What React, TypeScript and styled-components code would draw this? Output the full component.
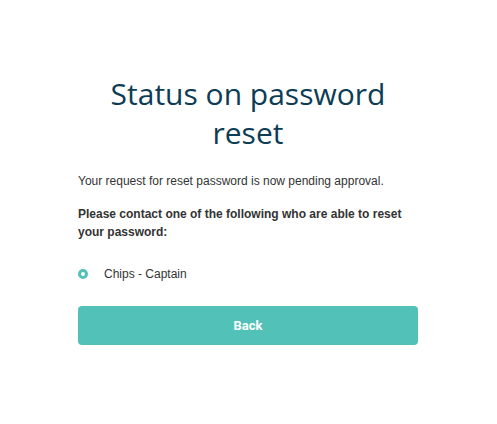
import React from "react";
import styled, { createGlobalStyle } from "styled-components";

const Global = createGlobalStyle`
  html, body { margin: 0; padding: 0; background: #ffffff; }
  body { font-family: "Liberation Sans", Arial, sans-serif; }
`;

const Page = styled.main`
  width: 340px;
  margin: 0 auto;
  padding: 74px 1px 0 0;
  display: flex;
  flex-direction: column;
`;

const Title = styled.h1`
  margin: 0;
  font-family: "Open Sans", "Noto Sans", sans-serif;
  font-weight: 400;
  font-size: 30px;
  line-height: 39px;
  color: #0d3c55;
  text-align: center;
  padding: 0 20px;
`;

const Text = styled.p<{ $bold?: boolean }>`
  margin: 0;
  font-size: 12px;
  line-height: 18px;
  color: #333333;
  font-weight: ${(p) => (p.$bold ? 700 : 400)};
`;

const Intro = styled(Text)`
  margin-top: 20px;
`;

const Contact = styled(Text)`
  margin-top: 15px;
`;

const List = styled.ul`
  list-style: none;
  margin: 24px 0 0;
  padding: 0;
`;

const Item = styled.li`
  display: flex;
  align-items: center;
  gap: 16px;
  font-size: 12px;
  line-height: 18px;
  color: #333333;
`;

const Ring = styled.span`
  width: 10px;
  height: 10px;
  box-sizing: border-box;
  border: 3px solid #52c1b7;
  border-radius: 50%;
`;

const Button = styled.button`
  margin-top: 23px;
  height: 39px;
  width: 100%;
  border: none;
  border-radius: 4px;
  background: #52c1b7;
  color: #ffffff;
  font-family: "Roboto", "Liberation Sans", sans-serif;
  font-weight: 700;
  font-size: 13px;
  cursor: pointer;
`;

export default function App() {
  return (
    <>
      <Global />
      <Page>
        <Title>Status on password reset</Title>
        <Intro>Your request for reset password is now pending approval.</Intro>
        <Contact $bold>
          Please contact one of the following who are able to reset your password:
        </Contact>
        <List>
          <Item>
            <Ring />
            Chips - Captain
          </Item>
        </List>
        <Button type="button">Back</Button>
      </Page>
    </>
  );
}
